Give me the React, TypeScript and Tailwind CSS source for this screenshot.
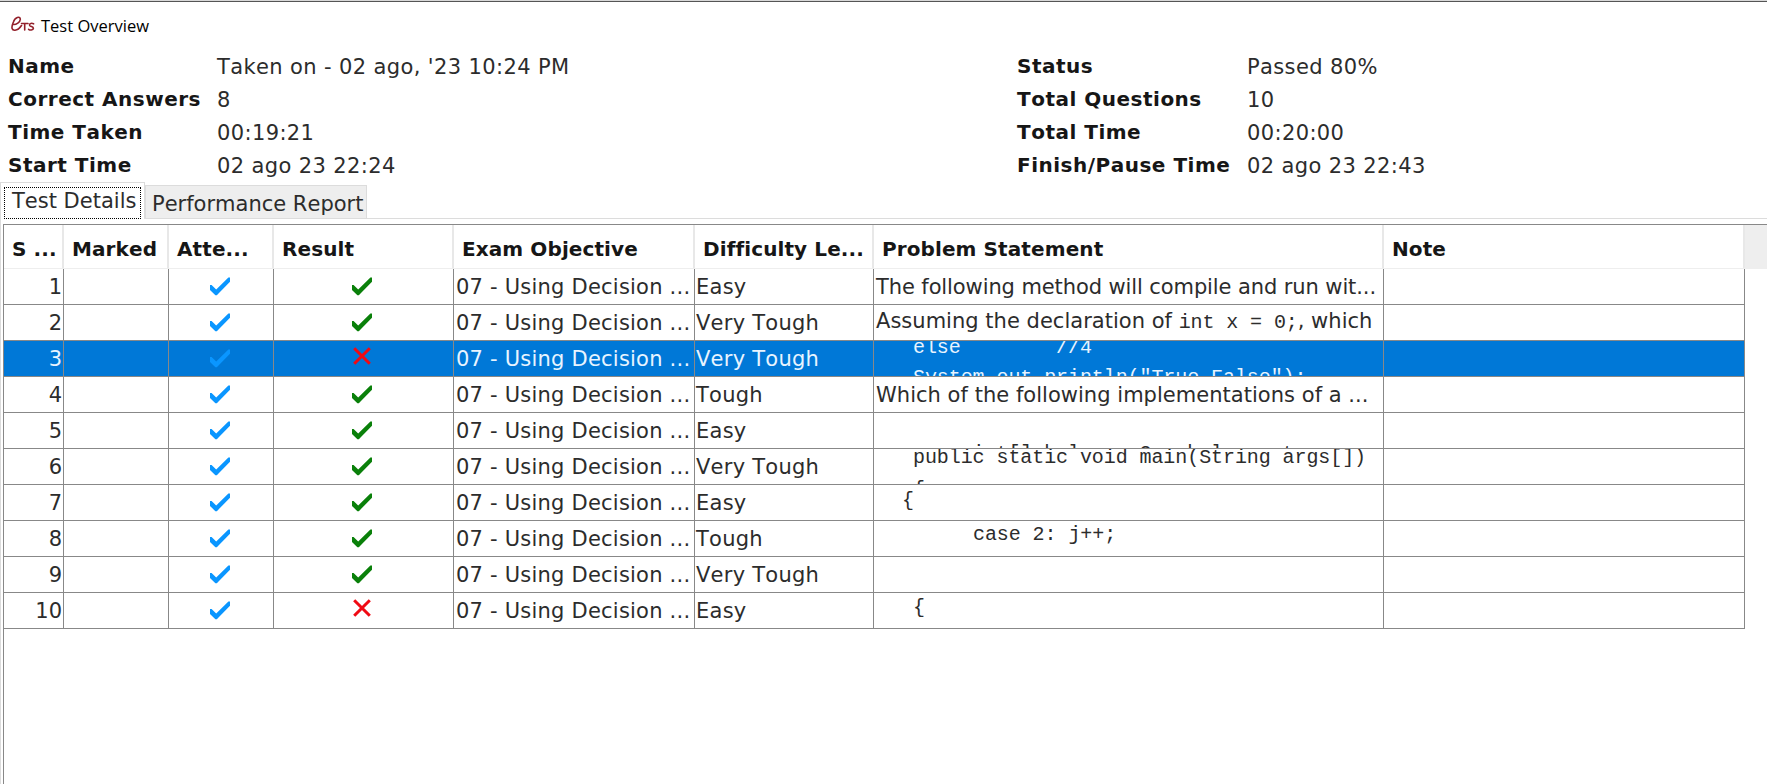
import React from "react";

const COLS = "grid grid-cols-[60px_105px_105px_180px_241px_179px_510px_361px]";

type Result = "pass" | "fail";
type Row = { n: number; result: Result; level: string; statement?: React.ReactNode; selected?: boolean };

const Code = ({ children, className }: { children: React.ReactNode; className: string }) => (
  <pre className={`font-['Liberation_Mono',monospace] text-[20px] tracking-[-0.08px] ${className}`}>{children}</pre>
);

const rows: Row[] = [
  { n: 1, result: "pass", level: "Easy", statement: <span className="tracking-[-0.1px]">The following method will compile and run wit...</span> },
  {
    n: 2,
    result: "pass",
    level: "Very Tough",
    statement: (
      <span className="-mt-[2px] tracking-[0.02px]">
        Assuming the declaration of <span className="font-['Liberation_Mono',monospace] text-[20px] tracking-[-0.1px]">int x = 0;</span>, which
      </span>
    ),
  },
  {
    n: 3,
    result: "fail",
    level: "Very Tough",
    selected: true,
    statement: <Code className="ml-[37px] -mt-[9px] self-start leading-[30px]">{'else        //4\nSystem.out.println("True False");'}</Code>,
  },
  { n: 4, result: "pass", level: "Tough", statement: <span className="tracking-[0.03px]">Which of the following implementations of a ...</span> },
  {
    n: 5,
    result: "pass",
    level: "Easy",
    statement: <Code className="ml-[37px] mt-[28px] self-start leading-[24px]">{"     int[] b l     2 = b l     t"}</Code>,
  },
  {
    n: 6,
    result: "pass",
    level: "Very Tough",
    statement: <Code className="ml-[37px] -mt-[8px] self-start leading-[32px]">{"public static void main(String args[])\n{"}</Code>,
  },
  { n: 7, result: "pass", level: "Easy", statement: <Code className="ml-[26px] -mt-[4px] leading-[24px]">{"{"}</Code> },
  { n: 8, result: "pass", level: "Tough", statement: <Code className="ml-[97px] -mt-[8px] leading-[24px]">{"case 2: j++;"}</Code> },
  { n: 9, result: "pass", level: "Very Tough" },
  { n: 10, result: "fail", level: "Easy", statement: <Code className="ml-[37px] -mt-[6px] leading-[24px]">{"{"}</Code> },
];

const Tick = ({ className }: { className: string }) => (
  <svg viewBox="0 0 20 19" className={`mr-[3px] h-[19px] w-[20px] ${className}`} fill="currentColor">
    <path d="M0 8 L1.6 8 L6.2 12.6 L18.4 0.6 L20 0.6 L20 4.8 L6.8 18.2 L5.4 18.2 L0 13 Z" />
  </svg>
);

const Cross = () => (
  <svg viewBox="0 0 18 18" className="mr-[3px] mb-[5px] h-[18px] w-[18px]" stroke="currentColor" strokeWidth="3" fill="none">
    <path d="M1.2 1.2 L16.8 16.8 M16.8 1.2 L1.2 16.8" />
  </svg>
);

const Logo = () => (
  <svg viewBox="0 0 24 16" className="mb-[3px] h-[16px] w-[24px]" stroke="#93202b" fill="none" strokeWidth="1.6" strokeLinecap="round">
    <path d="M2 8.5 C5 9 9.5 6 9.3 3 C9 0 4 1 2.4 6 C-0.2 12 1 14.5 4 14.2 C6.5 14 8.5 12.5 10.5 9.5" />
    <path d="M10.5 7.5 H17 M13.7 7.5 V14" />
    <path d="M22.6 7.8 C20 6.6 17.8 8 18.8 9.6 C19.6 10.8 22.4 10.6 22.4 12.4 C22.2 14.4 19 14.4 17.6 13.3" />
  </svg>
);

const leftInfo = [
  ["Name", "Taken on - 02 ago, '23 10:24 PM"],
  ["Correct Answers", "8"],
  ["Time Taken", "00:19:21"],
  ["Start Time", "02 ago 23 22:24"],
];
const rightInfo = [
  ["Status", "Passed 80%"],
  ["Total Questions", "10"],
  ["Total Time", "00:20:00"],
  ["Finish/Pause Time", "02 ago 23 22:43"],
];
const headers = ["S ...", "Marked", "Atte...", "Result", "Exam Objective", "Difficulty Le...", "Problem Statement", "Note"];

const Info = ({ items, cols }: { items: string[][]; cols: string }) => (
  <dl className={`grid auto-rows-[33px] items-center ${cols}`}>
    {items.map(([k, v]) => (
      <React.Fragment key={k}>
        <dt className="text-[20px] font-bold tracking-[0.5px] text-[#161616]">{k}</dt>
        <dd className="pt-[2px] tracking-[0.38px]">{v}</dd>
      </React.Fragment>
    ))}
  </dl>
);

export default function App() {
  return (
    <div className="flex h-[784px] w-[1767px] flex-col overflow-hidden whitespace-pre border-t border-[#d8d8d8] bg-white font-['DejaVu_Sans','Noto_Sans',sans-serif] text-[21px] leading-[24px] text-[#2c2c2c] [font-kerning:none]">
      <header className="flex h-[48px] shrink-0 items-center border-t border-[#555] pl-[11px]">
        <Logo />
        <h1 className="ml-[6px] font-['Open_Sans',sans-serif] text-[16.5px] text-black">Test Overview</h1>
      </header>
      <section className="flex h-[133px] shrink-0 pl-[8px]">
        <div className="w-[1009px]">
          <Info items={leftInfo} cols="grid-cols-[209px_1fr]" />
        </div>
        <Info items={rightInfo} cols="grid-cols-[230px_1fr]" />
      </section>
      <nav className="flex h-[37px] shrink-0 items-stretch">
        <button className="w-[145px] border-t border-r border-l border-[#dcdcdc] px-[3px] pt-[3px]">
          <span className="flex h-[32px] items-center border border-dotted border-black pb-[3px] pl-[7px]">Test Details</span>
        </button>
        <div className="flex flex-1 items-end border-b border-[#dcdcdc]">
          <button className="h-[33px] w-[222px] border border-b-0 border-[#dcdcdc] bg-[#eee] pt-[3px] pl-[6px] text-left">Performance Report</button>
        </div>
      </nav>
      <main className="flex flex-1 border-l border-[#dcdcdc] pt-[5px] pl-[2px]">
        <div className="flex-1 border-t border-l border-[#888]">
          <div className="flex h-[44px] bg-[#eee]">
            <div className={`${COLS} border-b border-[#eee] bg-white text-[20px] font-bold tracking-[0.1px] text-[#161616]`}>
              {headers.map((h) => (
                <div key={h} className="flex items-center border-r-2 border-[#e8e8e8] pt-[4px] pl-[8px]">{h}</div>
              ))}
            </div>
          </div>
          {rows.map((r) => (
            <div key={r.n} className={`${COLS} h-[36px] w-[1741px] ${r.selected ? "bg-[#0078d7] text-[#e8f4ff]" : ""}`}>
              <div className="flex items-center justify-end border-r border-b border-[#888] pt-[1px] pr-[1px]">{r.n}</div>
              <div className="border-r border-b border-[#888]" />
              <div className="flex items-center justify-center border-r border-b border-[#888]">
                <Tick className="text-[#0a96ff]" />
              </div>
              <div className="flex items-center justify-center border-r border-b border-[#888]">
                {r.result === "pass" ? <Tick className="text-[#0a800a]" /> : <span className="text-[#f00a14]"><Cross /></span>}
              </div>
              <div className="flex items-center overflow-hidden border-r border-b border-[#888] pt-[1px] pl-[2px] tracking-[0.22px]">07 - Using Decision ...</div>
              <div className="flex items-center border-r border-b border-[#888] pt-[1px] pl-[1px] tracking-[0.25px]">{r.level}</div>
              <div className="flex h-[36px] items-center overflow-hidden border-r border-b border-[#888] pt-[1px] pl-[2px]">{r.statement}</div>
              <div className="border-r border-b border-[#888]" />
            </div>
          ))}
        </div>
      </main>
    </div>
  );
}
